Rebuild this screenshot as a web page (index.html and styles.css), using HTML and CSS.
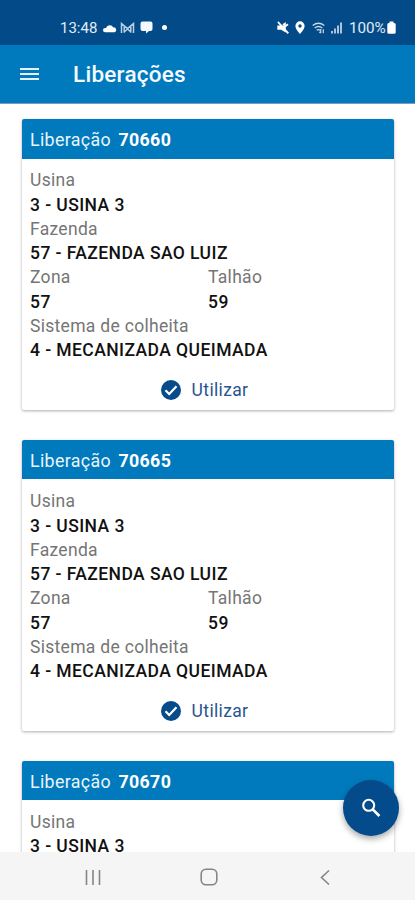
FILE: index.html
```html
<!DOCTYPE html>
<html lang="pt-BR">
<head>
<meta charset="utf-8">
<meta name="viewport" content="width=device-width, initial-scale=1">
<title>Liberações</title>
<link rel="stylesheet" href="styles.css">
</head>
<body>
<svg class="defs" aria-hidden="true">
  <symbol id="check" viewBox="0 0 20 20"><circle cx="10" cy="10" r="10" fill="#084b8a"/><path d="M4.500 10.300l3.700 3.700 7.300-7.700" fill="none" stroke="#fff" stroke-width="2.200"/></symbol>
</svg>
<div class="screen">
  <header class="status">
    <div class="status-group">
      <span class="clock">13:48</span>
      <svg class="cloud" width="14" height="10" viewBox="0 0 14 10"><path d="M2.200 9.300a2.200 2.200 0 0 1 0-4.400h.8a4 4 0 0 1 7.300-.5 2.600 2.600 0 0 1 1.500 4.900z" fill="#fff"/></svg>
      <svg class="mail" width="15" height="12" viewBox="0 0 15 12"><path d="M1.500 11V1.500l6 5 6-5V11M4.200 10.800V4.500M10.800 10.800V4.500M4.200 10l3.300-3 3.300 3" fill="none" stroke="#b9cee3" stroke-width="1.500"/></svg>
      <svg class="chat" width="13" height="13" viewBox="0 0 13 13"><path d="M2.500 .5h8a2 2 0 0 1 2 2v5.500a2 2 0 0 1-2 2H9L6 12.500V10H2.500a2 2 0 0 1-2-2V2.500a2 2 0 0 1 2-2z" fill="#f4f8ff"/></svg>
      <i class="dot"></i>
    </div>
    <div class="status-group">
      <svg class="mute" width="12" height="13" viewBox="0 0 12 13"><path d="M.3 4.500h3.200L8.800 1v10.500L4 8.700H.3z" fill="#fff"/><path d="M1 .8l10.300 11.500M8 5.500l3-2.200" stroke="#fff" stroke-width="1.900"/><path d="M2.200 .3l4 4.400" stroke="#034b88" stroke-width="1"/></svg>
      <svg class="pin" width="10" height="13" viewBox="0 0 10 13"><path fill-rule="evenodd" d="M5 .3A4.600 4.600 0 0 0 .4 4.900C.4 8.200 5 12.800 5 12.800s4.600-4.600 4.600-7.900A4.600 4.600 0 0 0 5 .3zM5 3.300a1.700 1.700 0 1 1 0 3.400 1.700 1.700 0 0 1 0-3.400z" fill="#fff"/></svg>
      <svg class="wifi" width="14" height="12" viewBox="0 0 14 12"><path d="M.7 3.500Q6.500-1 12.300 3.500M2.700 6Q6.500 3 10.300 6M4.700 8.300q1.800-1.300 3.500 0" fill="none" stroke="#c9d9e8" stroke-width="1.400"/><path d="M8.700 7v4M7.300 9.800l1.400 1.400M11.300 11.300v-4" fill="none" stroke="#c9d9e8" stroke-width="1.200"/></svg>
      <svg class="signal" width="11" height="12" viewBox="0 0 11 12"><path d="M1 11.500V9M4 11.500V6.500M7 11.500V3.500M10 11.500V.5" stroke="#bed0e3" stroke-width="1.800"/></svg>
      <span class="percent">100%</span>
      <svg class="battery" width="9" height="13" viewBox="0 0 9 13"><path d="M2.500 2V.5h4V2h.7Q8.700 2 8.700 3.500v7.800q0 1.500-1.500 1.500H1.800Q.3 12.800.3 11.300V3.500Q.3 2 1.800 2z" fill="#fff"/></svg>
    </div>
  </header>
  <div class="appbar">
    <svg width="19" height="14" viewBox="0 0 19 14"><path d="M0 2h19M0 7h19M0 12h19" stroke="#e4f1fa" stroke-width="2"/></svg>
    <h1>Liberações</h1>
  </div>
  <main>
    <article class="card">
      <h2>Liberação <b>70660</b></h2>
      <dl>
        <div><dt>Usina</dt><dd>3 - USINA 3</dd></div>
        <div><dt>Fazenda</dt><dd>57 - FAZENDA SAO LUIZ</dd></div>
        <div class="half"><dt>Zona</dt><dd>57</dd></div>
        <div class="half"><dt>Talhão</dt><dd>59</dd></div>
        <div><dt>Sistema de colheita</dt><dd>4 - MECANIZADA QUEIMADA</dd></div>
      </dl>
      <button><svg width="20" height="20"><use href="#check"/></svg><span>Utilizar</span></button>
    </article>
    <article class="card">
      <h2>Liberação <b>70665</b></h2>
      <dl>
        <div><dt>Usina</dt><dd>3 - USINA 3</dd></div>
        <div><dt>Fazenda</dt><dd>57 - FAZENDA SAO LUIZ</dd></div>
        <div class="half"><dt>Zona</dt><dd>57</dd></div>
        <div class="half"><dt>Talhão</dt><dd>59</dd></div>
        <div><dt>Sistema de colheita</dt><dd>4 - MECANIZADA QUEIMADA</dd></div>
      </dl>
      <button><svg width="20" height="20"><use href="#check"/></svg><span>Utilizar</span></button>
    </article>
    <article class="card">
      <h2>Liberação <b>70670</b></h2>
      <dl>
        <div><dt>Usina</dt><dd>3 - USINA 3</dd></div>
      </dl>
    </article>
  </main>
  <nav>
    <svg width="16" height="17" viewBox="0 0 16 17"><path d="M1.500 1v15M8 1v15M14.500 1v15" stroke="#858585" stroke-width="1.600"/></svg>
    <svg width="18" height="18" viewBox="0 0 18 18"><rect x="1.200" y="1.200" width="15.600" height="15.600" rx="4.800" fill="none" stroke="#858585" stroke-width="1.600"/></svg>
    <svg width="16" height="17" viewBox="0 0 16 17"><path d="M12 1.500L4.500 8.500l7.500 7" fill="none" stroke="#858585" stroke-width="1.600"/></svg>
  </nav>
  <div class="fab"><svg width="20" height="20" viewBox="0 0 20 20"><circle cx="7.700" cy="7.300" r="5.500" fill="none" stroke="#fff" stroke-width="2.100"/><path d="M11.500 11.100l6.900 6.900" stroke="#fff" stroke-width="2.700"/></svg></div>
</div>
</body>
</html>
```
FILE: styles.css
```css
* { box-sizing: border-box; }
body { margin: 0; background: #fff; font-family: Roboto, sans-serif; }
svg { display: block; flex: none; }
.defs { position: absolute; width: 0; height: 0; }
.screen { position: relative; height: 900px; display: flex; flex-direction: column; overflow: hidden; }

.status { flex: none; height: 45px; padding: 10px 19px 0 60px; display: flex; align-items: center; justify-content: space-between; background: #034b88; color: #e2ebf4; }
.status-group { display: flex; align-items: center; }
.clock { font-size: 15px; width: 43px; }
.mail { margin-left: 3px; }
.chat { margin-left: 5px; }
.dot { width: 5px; height: 5px; border-radius: 50%; background: #fff; margin-left: 9px; }
.pin { margin-left: 6px; }
.wifi { margin-left: 7px; }
.signal { margin-left: 5px; }
.percent { font-size: 15.200px; margin-left: 7px; width: 38px; }

.appbar { flex: none; height: 58.500px; padding: 0 19.500px; display: flex; align-items: center; gap: 34.500px; background: #007abd; border-bottom: 1px solid #7a9bba; }
.appbar h1 { margin: 0; font-size: 22.500px; font-weight: 500; color: #f5faff; letter-spacing: .25px; }

main { flex: 1; min-height: 0; overflow: hidden; padding: 15.500px 21px 0 22px; display: flex; flex-direction: column; gap: 30px; }
.card { flex: none; height: 290.800px; border-radius: 2px; background: #fff; box-shadow: 0 1px 3px rgba(0,0,0,.32); display: flex; flex-direction: column; }
.card h2 { margin: 0; height: 39.700px; flex: none; padding: 2px 8px 0; display: flex; align-items: center; gap: 7.500px; background: #007abd; border-radius: 2px 2px 0 0; color: #eaf5fc; font-size: 17.800px; font-weight: 400; letter-spacing: .35px; }
.card b { font-weight: 700; color: #fff; }
dl { margin: 0; padding: 9.800px 8px 0; display: grid; grid-template-columns: 1fr 1fr; }
dl > div { grid-column: span 2; }
dl > .half { grid-column: span 1; }
dt, dd { margin: 0; height: 24.250px; line-height: 24.250px; font-size: 17.500px; letter-spacing: .43px; white-space: nowrap; }
dt { color: #757575; letter-spacing: .3px; }
dd { color: #111; font-weight: 500; }
button { margin: 14.500px 0 0; padding: 0 7px 0 0; border: 0; background: none; height: 26px; display: flex; align-items: center; justify-content: center; gap: 11px; font: 400 17.500px Roboto, sans-serif; letter-spacing: .35px; color: #295491; }

nav { flex: none; height: 48px; padding: 2px 82px 0 85px; background: #f5f5f5; display: flex; align-items: center; justify-content: space-between; }
.fab { position: absolute; left: 343px; top: 779.500px; width: 56px; height: 56px; border-radius: 50%; background: #034b8b; display: flex; align-items: center; justify-content: center; box-shadow: 0 3px 6px rgba(0,0,0,.35); }
```
